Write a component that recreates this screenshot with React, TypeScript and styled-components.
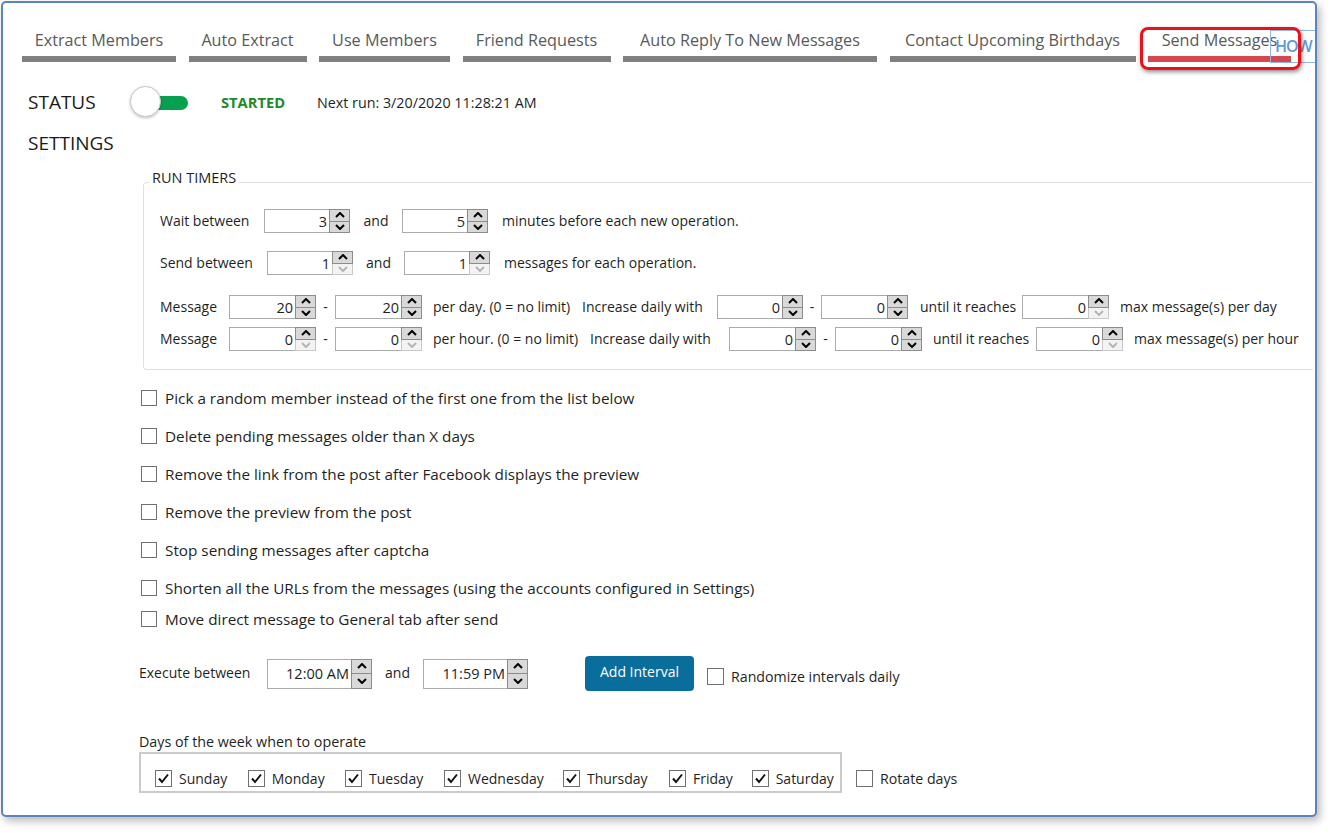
import React from 'react';
import styled, { createGlobalStyle } from 'styled-components';

const Global = createGlobalStyle`
  html, body { margin: 0; padding: 0; background: #fff; }
  body { font-family: "Open Sans", "Noto Sans", sans-serif; color: #1f1f1f; }
  * { box-sizing: border-box; }
`;

const Page = styled.div`
  width: 1334px;
  height: 833px;
  padding: 1px 0 0 1px;
  background: #fff;
  overflow: hidden;
`;

const Window = styled.div`
  position: relative;
  width: 1316px;
  height: 816px;
  border: 2px solid #5b84bc;
  border-radius: 5px;
  box-shadow: 3px 4px 9px rgba(0, 0, 0, 0.28);
  background: #fff;
  overflow: hidden;
  display: flex;
  flex-direction: column;
`;

/* ---------- tabs ---------- */
const TabStrip = styled.div`
  display: flex;
  gap: 12.5px;
  margin: 26px 0 0 19px;
`;

const Tab = styled.div<{ $w: number }>`
  flex: none;
  width: ${(p) => p.$w}px;
  display: flex;
  flex-direction: column;
  align-items: center;
  font-size: 16.2px;
  line-height: 22px;
  color: #595959;
  white-space: nowrap;
`;

const TabBar = styled.div<{ $active?: boolean }>`
  width: 100%;
  height: 6px;
  margin-top: 5px;
  background: ${(p) => (p.$active ? '#d6474f' : '#808080')};
`;

const Highlight = styled.div`
  position: absolute;
  left: 1137px;
  top: 24px;
  width: 161px;
  height: 43px;
  border: 3px solid #ec1118;
  border-radius: 8px;
  box-shadow: 1px 2px 4px rgba(0, 0, 0, 0.45);
  pointer-events: none;
`;

const HowButton = styled.div`
  position: absolute;
  left: 1267px;
  top: 27px;
  width: 60px;
  height: 33px;
  border: 1px solid #8fb8e3;
  color: #5b9bd8;
  font-size: 16px;
  font-weight: 600;
  line-height: 31px;
  padding-left: 4px;
  letter-spacing: -1px;
`;

/* ---------- status ---------- */
const StatusRow = styled.div`
  display: flex;
  align-items: center;
  height: 32px;
  margin: 24px 0 0 25px;
`;

const BigLabel = styled.div<{ $w?: number }>`
  flex: none;
  ${(p) => (p.$w ? `width: ${p.$w}px;` : '')}
  font-size: 19px;
  line-height: 24px;
  color: #1a1a1a;
`;

const Toggle = styled.div`
  position: relative;
  flex: none;
  width: 58px;
  height: 32px;
`;

const Track = styled.div`
  position: absolute;
  right: 0;
  top: 10px;
  width: 44px;
  height: 14px;
  border-radius: 7px;
  background: #07a04f;
`;

const Knob = styled.div`
  position: absolute;
  left: 0;
  top: 0;
  width: 31px;
  height: 31px;
  border-radius: 50%;
  background: #fff;
  border: 1px solid #c9c9c9;
  box-shadow: 0 1px 3px rgba(0, 0, 0, 0.25);
`;

const Started = styled.div`
  flex: none;
  margin-left: 33px;
  width: 96px;
  font-size: 14.7px;
  font-weight: 700;
  color: #1e8a28;
`;

const SmallText = styled.div`
  font-size: 14.3px;
  color: #1f1f1f;
  white-space: nowrap;
`;

const SettingsTitle = styled(BigLabel)`
  margin: 13px 0 0 25px;
`;

/* ---------- group box ---------- */
const GroupBox = styled.div`
  position: relative;
  flex: none;
  width: 1170px;
  margin: 27px 0 0 140px;
  border: 1px solid #dde0e4;
  border-right: none;
  border-radius: 4px 0 0 4px;
  padding: 26px 0 18px 16px;
  display: flex;
  flex-direction: column;
`;

const Legend = styled.div`
  position: absolute;
  left: 5px;
  top: -14px;
  padding: 0 3px;
  background: #fff;
  font-size: 14.5px;
  line-height: 18px;
  color: #1f1f1f;
`;

const TimerRow = styled.div<{ $mt?: number }>`
  display: flex;
  align-items: center;
  margin-top: ${(p) => p.$mt || 0}px;
  font-size: 14px;
  color: #1f1f1f;
`;

const Cell = styled.span<{ $w?: number; $center?: boolean; $pl?: number }>`
  flex: none;
  ${(p) => (p.$w ? `width: ${p.$w}px;` : '')}
  text-align: ${(p) => (p.$center ? 'center' : 'left')};
  padding-left: ${(p) => p.$pl || 0}px;
  padding-bottom: 2px;
  white-space: nowrap;
`;

/* ---------- spinner ---------- */
const SpinBox = styled.div<{ $w: number; $h: number }>`
  flex: none;
  display: flex;
  width: ${(p) => p.$w}px;
  height: ${(p) => p.$h}px;
`;

const SpinValue = styled.div`
  flex: 1;
  border: 1px solid #ababab;
  border-right: none;
  background: #fff;
  display: flex;
  align-items: center;
  justify-content: flex-end;
  padding-right: 2px;
  font-size: 14.5px;
  color: #1f1f1f;
`;

const SpinButtons = styled.div`
  flex: none;
  width: 21px;
  display: flex;
  flex-direction: column;
`;

const SpinBtn = styled.div<{ $disabled?: boolean }>`
  flex: 1;
  display: flex;
  align-items: center;
  justify-content: center;
  background: ${(p) => (p.$disabled ? '#f3f3f3' : '#d9d9d9')};
  border: 1px solid ${(p) => (p.$disabled ? '#c9c9c9' : '#8c8c8c')};
  & + & {
    border-top: none;
  }
`;

const Chevron = ({ down, disabled }: { down?: boolean; disabled?: boolean }) => (
  <svg width="10" height="6" viewBox="0 0 10 6">
    <polyline
      points={down ? '1,1 5,5 9,1' : '1,5 5,1 9,5'}
      fill="none"
      stroke={disabled ? '#b5b5b5' : '#000'}
      strokeWidth="2"
    />
  </svg>
);

const Spinner = ({
  value,
  w = 86,
  h = 24,
  downDisabled,
}: {
  value: string;
  w?: number;
  h?: number;
  downDisabled?: boolean;
}) => (
  <SpinBox $w={w} $h={h}>
    <SpinValue>{value}</SpinValue>
    <SpinButtons>
      <SpinBtn>
        <Chevron />
      </SpinBtn>
      <SpinBtn $disabled={downDisabled}>
        <Chevron down disabled={downDisabled} />
      </SpinBtn>
    </SpinButtons>
  </SpinBox>
);

/* ---------- checkboxes ---------- */
const CheckList = styled.div`
  display: flex;
  flex-direction: column;
  gap: 18px;
  margin: 18px 0 0 138px;
`;

const CheckRow = styled.label<{ $mt?: number }>`
  display: flex;
  align-items: center;
  gap: 8px;
  height: 20px;
  margin-top: ${(p) => p.$mt || 0}px;
  font-size: 15.3px;
  color: #1f1f1f;
  white-space: nowrap;
`;

const Box = styled.span<{ $size?: number }>`
  flex: none;
  width: ${(p) => p.$size || 16}px;
  height: ${(p) => p.$size || 16}px;
  border: 1px solid #707070;
  background: #fff;
  display: flex;
  align-items: center;
  justify-content: center;
`;

const CheckMark = () => (
  <svg width="13" height="13" viewBox="0 0 13 13">
    <polyline points="2,6.5 5,10 11,2.5" fill="none" stroke="#111" strokeWidth="2" />
  </svg>
);

/* ---------- execute ---------- */
const ExecRow = styled.div`
  display: flex;
  align-items: center;
  margin: 27px 0 0 136px;
  font-size: 14px;
  color: #1f1f1f;
`;

const PrimaryButton = styled.button`
  flex: none;
  margin-left: 57px;
  width: 109px;
  height: 35px;
  border: none;
  border-radius: 4px;
  background: #0a6e9c;
  color: #fff;
  font-family: inherit;
  font-size: 14px;
  padding: 0 0 4px;
`;

const InlineCheck = styled.label<{ $ml: number; $mt?: number }>`
  display: flex;
  align-items: center;
  gap: 7px;
  margin-left: ${(p) => p.$ml}px;
  margin-top: ${(p) => p.$mt || 0}px;
  font-size: 14.2px;
  color: #1f1f1f;
  white-space: nowrap;
`;

/* ---------- days ---------- */
const DaysLabel = styled.div`
  margin: 42px 0 0 136px;
  font-size: 14.3px;
  line-height: 18px;
  color: #1f1f1f;
`;

const DaysRow = styled.div`
  display: flex;
  align-items: center;
  margin: 1px 0 0 136px;
`;

const DaysBox = styled.div`
  flex: none;
  width: 703px;
  height: 41px;
  border: 2px solid #cbcbcb;
  display: flex;
  align-items: center;
  padding: 12px 0 0 14px;
`;

const DayItem = styled.label<{ $w: number }>`
  flex: none;
  width: ${(p) => p.$w}px;
  display: flex;
  align-items: center;
  gap: 7px;
  font-size: 14px;
  color: #1f1f1f;
  white-space: nowrap;
`;

const tabs = [
  { label: 'Extract Members', w: 154 },
  { label: 'Auto Extract', w: 118 },
  { label: 'Use Members', w: 131 },
  { label: 'Friend Requests', w: 148 },
  { label: 'Auto Reply To New Messages', w: 254 },
  { label: 'Contact Upcoming Birthdays', w: 246 },
  { label: 'Send Messages', w: 143, active: true },
];

const options = [
  'Pick a random member instead of the first one from the list below',
  'Delete pending messages older than X days',
  'Remove the link from the post after Facebook displays the preview',
  'Remove the preview from the post',
  'Stop sending messages after captcha',
  'Shorten all the URLs from the messages (using the accounts configured in Settings)',
];

const days = [
  { d: 'Sunday', w: 92.7 },
  { d: 'Monday', w: 97.3 },
  { d: 'Tuesday', w: 99 },
  { d: 'Wednesday', w: 119 },
  { d: 'Thursday', w: 106 },
  { d: 'Friday', w: 82.7 },
  { d: 'Saturday', w: 88 },
];

export default function App() {
  return (
    <>
      <Global />
      <Page>
        <Window>
          <TabStrip>
            {tabs.map((t) => (
              <Tab key={t.label} $w={t.w}>
                {t.label}
                <TabBar $active={t.active} />
              </Tab>
            ))}
          </TabStrip>
          <HowButton>HOW</HowButton>
          <Highlight />

          <StatusRow>
            <BigLabel $w={102}>STATUS</BigLabel>
            <Toggle>
              <Track />
              <Knob />
            </Toggle>
            <Started>STARTED</Started>
            <SmallText>Next run: 3/20/2020 11:28:21 AM</SmallText>
          </StatusRow>
          <SettingsTitle>SETTINGS</SettingsTitle>

          <GroupBox>
            <Legend>RUN TIMERS</Legend>
            <TimerRow>
              <Cell $w={104}>Wait between</Cell>
              <Spinner value="3" />
              <Cell $w={52} $center>and</Cell>
              <Spinner value="5" />
              <Cell $pl={14}>minutes before each new operation.</Cell>
            </TimerRow>
            <TimerRow $mt={18}>
              <Cell $w={107}>Send between</Cell>
              <Spinner value="1" downDisabled />
              <Cell $w={51} $center>and</Cell>
              <Spinner value="1" downDisabled />
              <Cell $pl={14}>messages for each operation.</Cell>
            </TimerRow>
            <TimerRow $mt={20}>
              <Cell $w={69}>Message</Cell>
              <Spinner value="20" w={87} />
              <Cell $w={19} $center>-</Cell>
              <Spinner value="20" w={87} />
              <Cell $w={160} $pl={11}>per day. (0 = no limit)</Cell>
              <Cell $w={135}>Increase daily with</Cell>
              <Spinner value="0" />
              <Cell $w={18} $center>-</Cell>
              <Spinner value="0" w={87} />
              <Cell $w={114} $pl={12}>until it reaches</Cell>
              <Spinner value="0" w={87} downDisabled />
              <Cell $pl={11}>max message(s) per day</Cell>
            </TimerRow>
            <TimerRow $mt={8}>
              <Cell $w={69}>Message</Cell>
              <Spinner value="0" w={87} downDisabled />
              <Cell $w={19} $center>-</Cell>
              <Spinner value="0" w={87} downDisabled />
              <Cell $w={168} $pl={11}>per hour. (0 = no limit)</Cell>
              <Cell $w={139}>Increase daily with</Cell>
              <Spinner value="0" w={87} />
              <Cell $w={19} $center>-</Cell>
              <Spinner value="0" w={87} />
              <Cell $w={114} $pl={11}>until it reaches</Cell>
              <Spinner value="0" w={87} downDisabled />
              <Cell $pl={11}>max message(s) per hour</Cell>
            </TimerRow>
          </GroupBox>

          <CheckList>
            {options.map((o) => (
              <CheckRow key={o}>
                <Box />
                {o}
              </CheckRow>
            ))}
            <CheckRow $mt={-7}>
              <Box />
              Move direct message to General tab after send
            </CheckRow>
          </CheckList>

          <ExecRow>
            <Cell $w={128}>Execute between</Cell>
            <Spinner value="12:00 AM" w={105} h={30} />
            <Cell $w={51} $center>and</Cell>
            <Spinner value="11:59 PM" w={105} h={30} />
            <PrimaryButton>Add Interval</PrimaryButton>
            <InlineCheck $ml={13} $mt={6}>
              <Box $size={17} />
              Randomize intervals daily
            </InlineCheck>
          </ExecRow>

          <DaysLabel>Days of the week when to operate</DaysLabel>
          <DaysRow>
            <DaysBox>
              {days.map((d) => (
                <DayItem key={d.d} $w={d.w}>
                  <Box $size={17}>
                    <CheckMark />
                  </Box>
                  {d.d}
                </DayItem>
              ))}
            </DaysBox>
            <InlineCheck $ml={14} $mt={12}>
              <Box $size={17} />
              Rotate days
            </InlineCheck>
          </DaysRow>
        </Window>
      </Page>
    </>
  );
}
